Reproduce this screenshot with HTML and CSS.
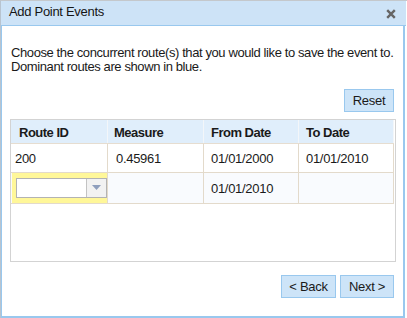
FILE: index.html
```html
<!DOCTYPE html>
<html lang="en">
<head>
    <meta charset="UTF-8">
    <title>Add Point Events</title>
    <link rel="stylesheet" href="styles.css">
</head>
<body>
    <div class="dialog">
        <div class="titlebar">
            <span class="title">Add Point Events</span>
            <svg class="close" width="10" height="10" viewBox="0 0 10 10">
                <path d="M1.2 1.2 L8.8 8.8 M8.8 1.2 L1.2 8.8" stroke="#666666" stroke-width="2.4" fill="none"/>
            </svg>
        </div>
        <div class="content">
            <p class="intro">Choose the concurrent route(s) that you would like to save the event to.<br>Dominant routes are shown in blue.</p>
            <div class="toolbar">
                <button class="btn btn-reset">Reset</button>
            </div>
            <div class="grid">
                <div class="row header">
                    <div class="cell c1">Route ID</div>
                    <div class="cell c2">Measure</div>
                    <div class="cell c3">From Date</div>
                    <div class="cell c4">To Date</div>
                </div>
                <div class="row">
                    <div class="cell c1 val-route">200</div>
                    <div class="cell c2 val-measure">0.45961</div>
                    <div class="cell c3">01/01/2000</div>
                    <div class="cell c4">01/01/2010</div>
                </div>
                <div class="row row-alt">
                    <div class="cell c1 editing">
                        <div class="combo">
                            <div class="combo-text"></div>
                            <div class="combo-trigger">
                                <svg width="9" height="5" viewBox="0 0 9 5"><path d="M0 0 H9 L4.5 5 Z" fill="#8f9fbd"/></svg>
                            </div>
                        </div>
                    </div>
                    <div class="cell c2"></div>
                    <div class="cell c3">01/01/2010</div>
                    <div class="cell c4"></div>
                </div>
            </div>
            <div class="footer">
                <button class="btn btn-back">&lt; Back</button>
                <button class="btn btn-next">Next &gt;</button>
            </div>
        </div>
    </div>
</body>
</html>
```

FILE: styles.css
```css
body {
    margin: 0;
    font-family: "Liberation Sans", Arial, sans-serif;
    font-size: 13px;
    letter-spacing: -0.3px;
    color: #1a1a1a;
    background-color: #ffffff;
}

.dialog {
    width: 407px;
    height: 318px;
    box-sizing: border-box;
    border-top: 1px solid #c4c8cc;
    border-left: 1px solid #b8c4d0;
    display: flex;
    flex-direction: column;
}

.titlebar {
    height: 25px;
    box-sizing: border-box;
    padding: 4px 10px 0 8px;
    background-color: #cde3f7;
    border-bottom: 1px solid #99c8ee;
    display: flex;
    justify-content: space-between;
    align-items: flex-start;
    margin-right: 1px;
}

.title {
    line-height: 14px;
    color: #151515;
}

.close {
    margin-top: 4px;
}

.content {
    flex: 1;
    border-left: 1px solid #99c8ee;
    border-right: 2px solid #99c8ee;
    border-bottom: 2px solid #99c8ee;
    margin-right: 2px;
    padding: 20px 7px 0 8px;
    display: flex;
    flex-direction: column;
}

.intro {
    margin: 0 0 0 1px;
    line-height: 14px;
    color: #1a1a1a;
    white-space: nowrap;
    letter-spacing: -0.4px;
}

.toolbar {
    display: flex;
    justify-content: flex-end;
    margin-top: 15px;
    padding-right: 2px;
}

.btn {
    font-family: "Liberation Sans", Arial, sans-serif;
    font-size: 13px;
    letter-spacing: -0.3px;
    color: #1a1a1a;
    background-color: #cde4f8;
    border: 1px solid #99c8ee;
    padding: 0;
    height: 23px;
    line-height: 21px;
    text-align: center;
}

.btn-reset {
    width: 50px;
}

.grid {
    margin-top: 7px;
    height: 143px;
    flex-shrink: 0;
    box-sizing: border-box;
    border: 1px solid #d3d3d3;
    padding-right: 1px;
    background-color: #ffffff;
}

.row {
    display: flex;
    height: 28px;
    border-bottom: 1px solid #e3dacb;
}

.row-alt {
    height: 30px;
    background-color: #f9fbfe;
}

.header {
    height: 23px;
    background-color: #e0eefb;
    font-weight: bold;
    border-bottom: 1px solid #e6ddd0;
}

.cell {
    box-sizing: border-box;
    border-right: 1px solid #e3dacb;
    display: flex;
    align-items: center;
    padding-left: 7px;
}

.header .cell {
    border-right: 1px solid #f3f6f9;
    padding-top: 1px;
    letter-spacing: -0.5px;
}

.c1 { width: 97px; }
.c2 { width: 96px; }
.c3 { width: 95px; }
.c4 { width: 95px; }

.header .c1 { padding-left: 8px; }
.header .c2 { padding-left: 6px; }

.val-route { padding-left: 4px; }
.val-measure { padding-left: 8px; }

.editing {
    background-color: #fff799;
    padding-left: 4px;
    margin-left: 1px;
    width: 96px;
}

.combo {
    display: flex;
    width: 92px;
    height: 20px;
    box-sizing: border-box;
    border: 1px solid #b3b3b3;
    background-color: #ffffff;
    margin-top: -1px;
}

.combo-text {
    flex: 1;
}

.combo-trigger {
    width: 19px;
    border-left: 1px solid #c3c3c3;
    background-color: #f2f2f2;
    display: flex;
    align-items: center;
    justify-content: center;
}

.footer {
    display: flex;
    justify-content: flex-end;
    gap: 4px;
    margin-top: 13px;
    padding-right: 2px;
}

.btn-back {
    width: 55px;
    height: 23px;
}

.btn-next {
    width: 54px;
    height: 23px;
}
```
